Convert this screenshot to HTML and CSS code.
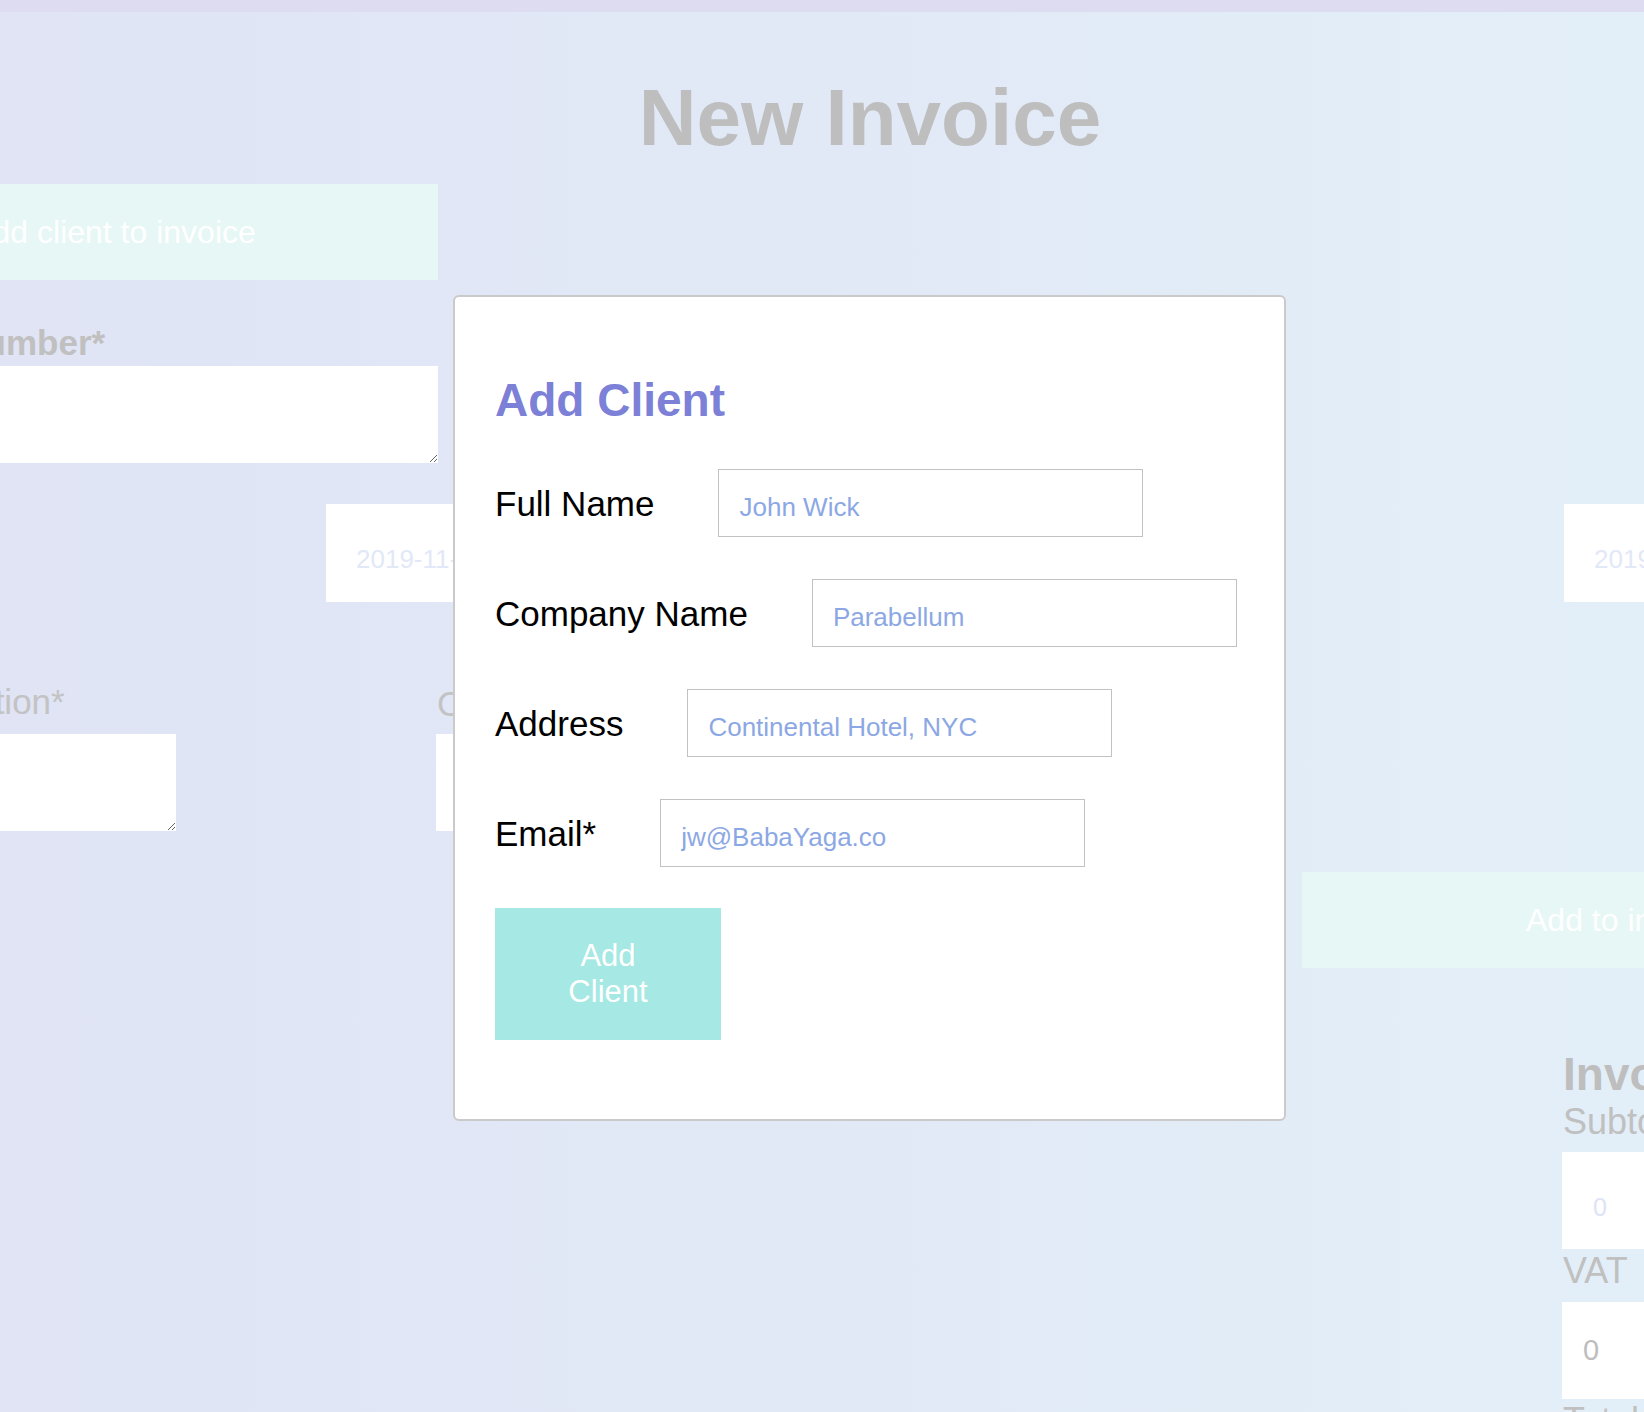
FILE: index.html
```html
<!DOCTYPE html>
<html lang="en">
<head>
<meta charset="utf-8">
<title>New Invoice</title>
<link rel="stylesheet" href="styles.css">
</head>
<body>
<div class="topbar"></div>
<main class="page">
  <h1 class="page-title">New Invoice</h1>

  <section class="row row-client">
    <div class="col-left">
      <button class="ghost-btn" type="button">Add client to invoice</button>
      <label class="bg-label bold indent">Invoice Number*</label>
      <textarea class="bg-textarea"></textarea>
    </div>
  </section>

  <section class="row row-dates">
    <input class="bg-input date-issue" type="text" value="2019-11-20">
    <input class="bg-input date-due" type="text" value="2019-12-20">
  </section>

  <section class="row row-item">
    <div class="item-desc">
      <label class="bg-label light">Description*</label>
      <textarea class="bg-textarea"></textarea>
    </div>
    <div class="item-cost">
      <label class="bg-label light">Cost*</label>
      <input class="bg-input plain" type="text">
    </div>
  </section>

  <section class="row row-add">
    <button class="ghost-btn add-item" type="button">Add to invoice</button>
  </section>

  <section class="row row-totals">
    <div class="totals">
      <h2 class="totals-title">Invoice Total</h2>
      <label class="sum-label">Subtotal</label>
      <input class="bg-input sum-input soft" type="text" value="0">
      <label class="sum-label">VAT</label>
      <input class="bg-input sum-input grey" type="text" value="0">
      <label class="sum-label">Total</label>
    </div>
  </section>
</main>

<div class="modal">
  <h2 class="modal-title">Add Client</h2>
  <form class="client-form">
    <div class="form-row">
      <label class="form-label">Full Name</label>
      <input class="form-input" type="text" value="John Wick">
    </div>
    <div class="form-row">
      <label class="form-label">Company Name</label>
      <input class="form-input" type="text" value="Parabellum">
    </div>
    <div class="form-row">
      <label class="form-label">Address</label>
      <input class="form-input" type="text" value="Continental Hotel, NYC">
    </div>
    <div class="form-row">
      <label class="form-label">Email*</label>
      <input class="form-input" type="text" value="jw@BabaYaga.co">
    </div>
    <button class="add-btn" type="button">Add Client</button>
  </form>
</div>
</body>
</html>
```

FILE: styles.css
```css
* { box-sizing: border-box; }

html, body {
  margin: 0;
  padding: 0;
}

body {
  width: 1644px;
  height: 1412px;
  overflow: hidden;
  position: relative;
  font-family: "Liberation Sans", Arial, Helvetica, sans-serif;
  background: linear-gradient(to right, #e0e4f5 0%, #e1e9f6 50%, #e3eff8 100%);
}

.topbar {
  height: 12px;
  background: #dddcf0;
}

/* faded page behind the dialog */
.page {
  width: 2162px;
  margin-left: -211px;
  display: flex;
  flex-direction: column;
}

.page-title {
  margin: 66px 0 0;
  font-size: 80px;
  line-height: 80px;
  font-weight: bold;
  color: #bebebe;
  text-align: center;
}

.row {
  display: flex;
}

.row-client { margin-top: 26px; }
.row-dates { margin-top: 41px; }
.row-item { margin-top: 80px; }
.row-add { margin-top: 41px; }
.row-totals { margin-top: 81px; }

.col-left {
  width: 649px;
  display: flex;
  flex-direction: column;
}

.ghost-btn {
  width: 649px;
  height: 96px;
  border: none;
  padding: 0;
  background: #e6f7f6;
  color: #ffffff;
  font-family: inherit;
  font-size: 32px;
}

.add-item { margin-left: 1513px; }

.bg-label {
  display: block;
  font-size: 35px;
  line-height: 40px;
  color: #c0c0c0;
}

.bg-label.bold { font-weight: bold; }
.bg-label.light { color: #c3c3c3; }
.bg-label.indent { padding-left: 40px; margin-top: 43px; }

.bg-textarea {
  display: block;
  width: 100%;
  height: 97px;
  border: none;
  background: #ffffff;
  margin: 3px 0 0;
  padding: 0;
}

.item-desc .bg-textarea,
.item-cost .bg-input { margin-top: 12px; }

.bg-input {
  display: block;
  height: 98px;
  border: none;
  background: #ffffff;
  font-family: inherit;
  font-size: 26px;
  color: #e2e8f7;
  padding: 13px 30px 0;
  outline: none;
}

.date-issue { margin-left: 537px; width: 300px; }
.date-due { margin-left: 938px; width: 340px; }

.item-desc { margin-left: 87px; width: 300px; }
.item-cost { margin-left: 260px; width: 300px; }
.item-cost .bg-label { padding-left: 1px; padding-top: 4px; line-height: 36px; }
.bg-input.plain { width: 300px; height: 97px; }

.totals {
  margin-left: 1774px;
  width: 388px;
  display: flex;
  flex-direction: column;
}

.totals-title {
  margin: 0;
  font-size: 46px;
  line-height: 50px;
  font-weight: bold;
  color: #bebebe;
}

.sum-label {
  display: block;
  font-size: 36px;
  line-height: 40px;
  color: #c0c0c0;
  margin-top: 2px;
}

.totals-title + .sum-label { margin-top: 3px; }

.sum-input {
  width: 388px;
  height: 97px;
  margin-top: 10px;
  margin-left: -1px;
}

.sum-input.soft {
  color: #dce4f6;
  font-size: 25px;
  padding: 13px 31px 0;
}

.sum-input.grey {
  color: #bdbdbd;
  font-size: 29px;
  padding: 0 21px;
  margin-top: 11px;
}

/* dialog */
.modal {
  position: absolute;
  left: 453px;
  top: 295px;
  width: 833px;
  background: #ffffff;
  border: 2px solid #cacaca;
  border-radius: 6px;
  padding: 77px 40px 79px;
}

.modal-title {
  margin: 0;
  font-size: 46px;
  line-height: 53px;
  font-weight: bold;
  color: #7c80d6;
}

.client-form {
  display: flex;
  flex-direction: column;
  align-items: flex-start;
}

.form-row {
  display: flex;
  align-items: baseline;
  margin-top: 42px;
}

.form-label {
  font-size: 35px;
  line-height: 40px;
  color: #000000;
}

.form-input {
  width: 425px;
  height: 68px;
  margin-left: 64px;
  border: 1px solid #c2c2c2;
  border-radius: 0;
  padding: 8px 20px 0;
  font-family: inherit;
  font-size: 26px;
  color: #8ca8e4;
  background: #ffffff;
  outline: none;
}

.add-btn {
  margin-top: 41px;
  width: 226px;
  height: 132px;
  border: none;
  padding: 0 45px;
  background: #a6e8e3;
  color: #ffffff;
  font-family: inherit;
  font-size: 31px;
  line-height: 1.15;
  text-align: center;
}
```
